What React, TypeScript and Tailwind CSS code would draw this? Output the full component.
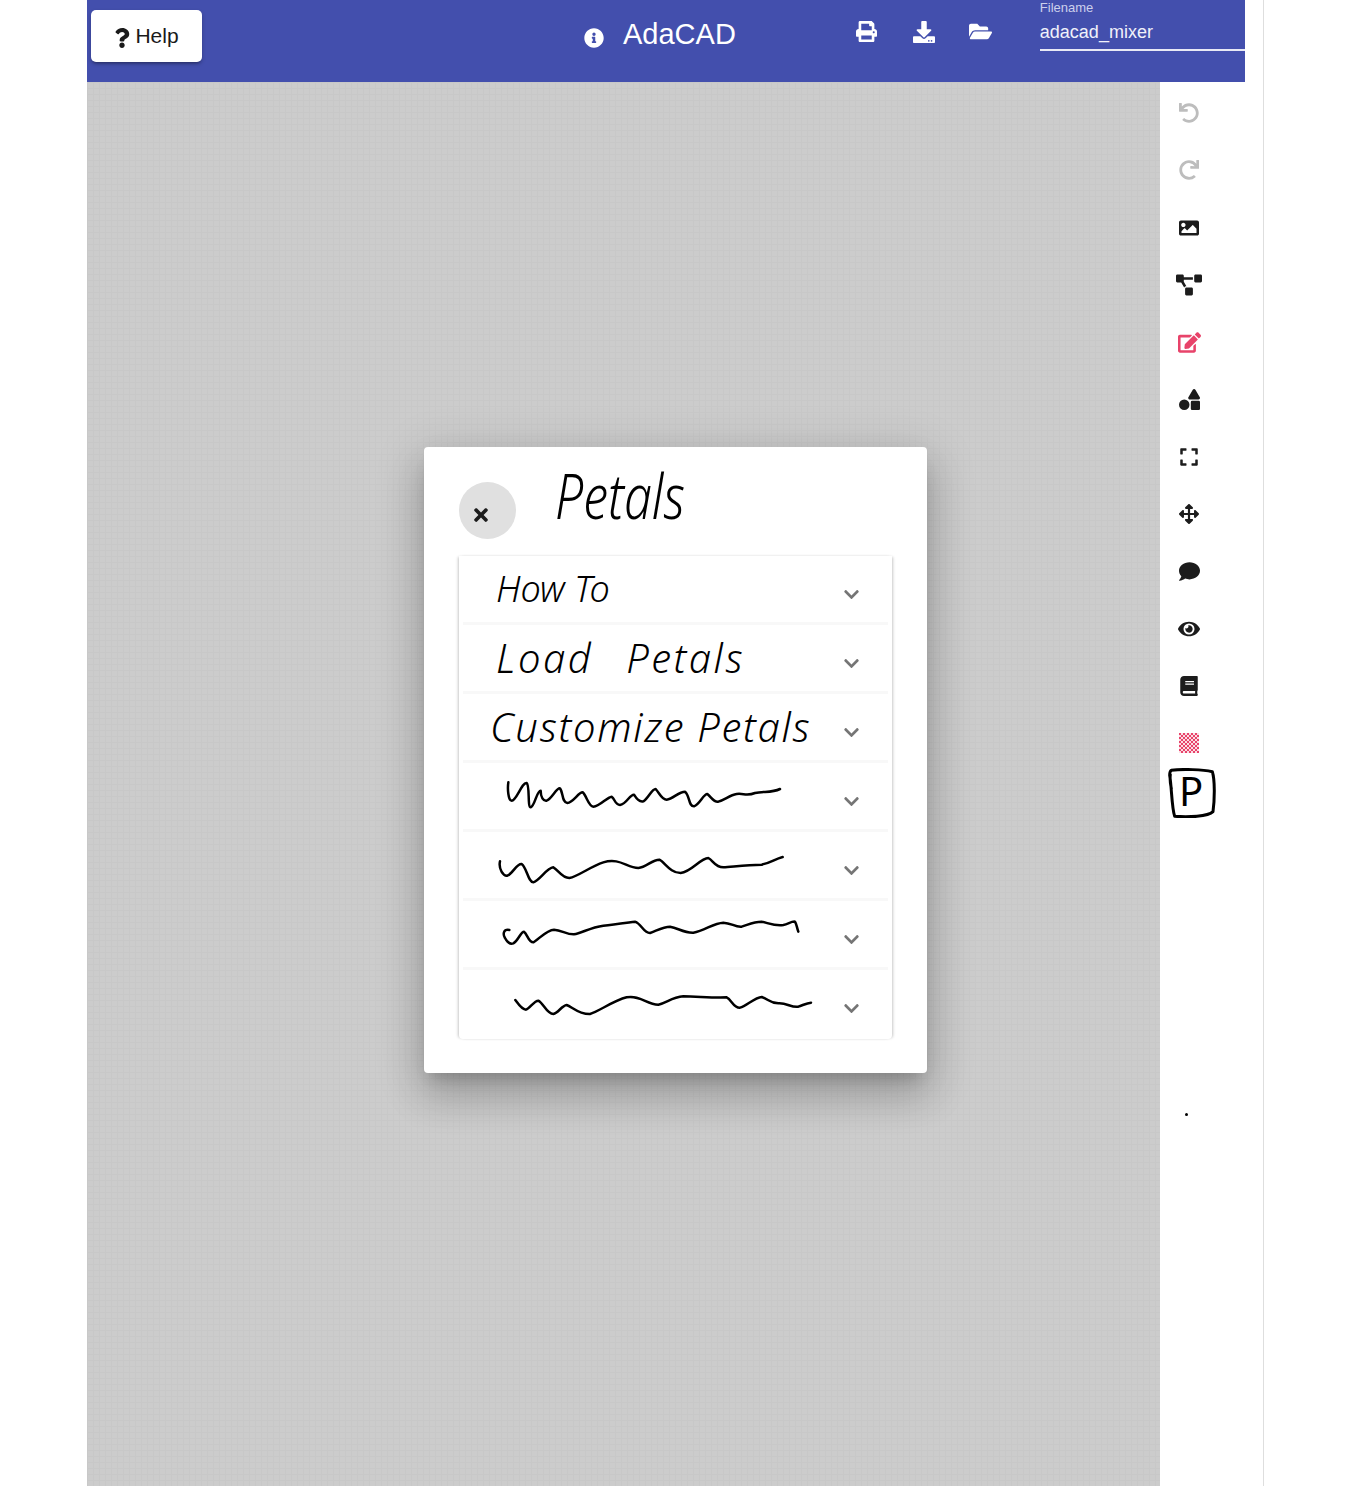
import React from "react";
import {
  FaArrowsAlt, FaBook, FaChevronDown, FaComment, FaDownload, FaEdit, FaExpand, FaEye,
  FaFolderOpen, FaImage, FaInfoCircle, FaPrint, FaProjectDiagram, FaQuestion, FaRedo,
  FaShapes, FaTimes, FaUndo,
} from "react-icons/fa";

const scribbles = [
  { vb: "27 -21 1110 207", d: "M175 40 C172 60 175 95 185 95 C200 95 215 40 230 42 C240 50 232 115 242 115 C255 110 260 65 272 65 C272 85 280 97 290 95 C305 90 320 55 330 58 C340 70 335 100 352 102 C370 100 385 70 398 70 C410 80 415 112 430 113 C450 112 470 85 485 83 C495 90 495 108 510 108 C530 105 540 75 552 77 C560 90 570 100 580 97 C595 88 605 60 617 60 C630 75 635 92 650 92 C670 90 685 68 705 68 C720 80 715 112 732 112 C750 105 760 75 772 75 C785 85 790 100 805 98 C825 92 840 78 860 75 C880 72 890 82 915 72 C940 66 965 72 990 60" },
  { vb: "27 186 1110 207", d: "M150 277 C145 300 160 322 172 320 C190 312 200 283 215 285 C230 295 235 340 250 340 C268 335 290 297 310 295 C325 303 335 327 358 327 C385 322 420 293 460 280 C510 265 530 297 565 297 C590 295 605 272 628 272 C645 280 660 312 692 312 C725 308 750 268 775 267 C790 275 795 295 820 295 C850 293 890 287 935 287 C960 282 975 270 998 264" },
  { vb: "27 -27 1110 207", d: "M178 63 C160 60 158 75 165 87 C172 100 180 107 190 103 C205 95 212 68 222 68 C232 75 235 100 250 100 C265 92 290 62 312 62 C335 63 350 77 372 76 C395 73 420 55 460 50 C490 47 525 42 555 38 C575 45 580 72 600 72 C620 65 640 53 660 53 C685 57 700 72 730 71 C765 65 790 42 820 41 C845 42 855 55 875 53 C895 47 910 38 935 38 C955 42 975 52 1000 48 C1015 45 1025 36 1035 38 C1040 45 1040 55 1045 68" },
  { vb: "27 180 1110 207", d: "M196 273 C205 285 215 302 228 302 C240 298 252 275 265 275 C280 282 290 315 310 315 C325 312 335 290 350 288 C365 292 385 316 420 315 C445 308 490 275 530 265 C570 258 590 286 625 287 C650 282 665 265 700 262 C740 262 790 267 830 265 C845 272 850 297 870 296 C890 290 915 265 935 264 C955 270 960 283 985 283 C1010 281 1025 297 1045 293 C1060 288 1070 282 1083 281" },
];

function Row({ children, last }: { children: React.ReactNode; last?: boolean }) {
  return (
    <div className="px-[4px]">
      <div className={`flex h-[69px] items-center border-b-[3px] pr-[28px] ${last ? "border-transparent" : "border-[#f8f8f8]"}`}>
        <div className="min-w-0 flex-1">{children}</div>
        <FaChevronDown size={17} className="mt-[11px] text-[#757575]" />
      </div>
    </div>
  );
}

function Hand({ children, className }: { children: React.ReactNode; className: string }) {
  return (
    <span className={`block origin-left whitespace-nowrap font-['Noto_Sans',sans-serif] font-light italic leading-none text-black ${className}`}>
      {children}
    </span>
  );
}

function Tool({ children }: { children: React.ReactNode }) {
  return <div className="flex h-[57.3px] w-[58px] items-center justify-center text-[#1c1c1c]">{children}</div>;
}

export default function App() {
  return (
    <div className="relative h-[1486px] w-[1351px] overflow-hidden bg-white font-['Liberation_Sans',sans-serif]">
      <div className="ml-[87px] flex h-full w-[1177px] flex-col border-r border-[#dedede]">
        <header className="flex h-[82px] w-[1158px] shrink-0 items-start bg-[#434fad] text-white">
          <button className="ml-[4px] mt-[10px] flex h-[52px] w-[111px] items-center justify-center gap-[3px] rounded-[5px] bg-white pr-[2px] text-[21px] text-[#1a1a1a] shadow-[0_3px_3px_-2px_rgba(0,0,0,.3),0_2px_4px_rgba(0,0,0,.2)]">
            <FaQuestion size={20} className="mt-[3px]" />
            <span>Help</span>
          </button>
          <FaInfoCircle size={20} className="ml-[382px] mt-[28px]" />
          <h1 className="ml-[19px] mt-[17px] text-[29px] leading-[34px]">AdaCAD</h1>
          <FaPrint size={21} className="ml-[120px] mt-[21px]" />
          <FaDownload size={22} className="ml-[36px] mt-[21px]" />
          <FaFolderOpen size={23} className="ml-[34px] mt-[20px]" />
          <div className="ml-[48px] flex-1 self-stretch">
            <div className="h-[51px] border-b-2 border-[#e8e9f5]">
              <div className="text-[13px] leading-[15px] text-[#ccd0ec]">Filename</div>
              <div className="mt-[7px] text-[18px] leading-[20px] text-[#f0f1fa]">adacad_mixer</div>
            </div>
          </div>
        </header>

        <div className="flex min-h-0 flex-1">
          <main className="w-[1073px] bg-[#cccccc] bg-[linear-gradient(#c8c8c8_1px,transparent_1px),linear-gradient(90deg,#c8c8c8_1px,transparent_1px)] bg-[size:6px_6px]" />
          <aside className="flex flex-1 flex-col pt-[2.5px]">
            <Tool><FaUndo size={20} className="text-[#bdbdbd]" /></Tool>
            <Tool><FaRedo size={20} className="text-[#bdbdbd]" /></Tool>
            <Tool><FaImage size={20} /></Tool>
            <Tool><FaProjectDiagram size={26} /></Tool>
            <Tool><FaEdit size={23} className="text-[#e8436a]" /></Tool>
            <Tool><FaShapes size={21} /></Tool>
            <Tool><FaExpand size={20} /></Tool>
            <Tool><FaArrowsAlt size={20} /></Tool>
            <Tool><FaComment size={21} /></Tool>
            <Tool><FaEye size={22} /></Tool>
            <Tool><FaBook size={20} /></Tool>
            <Tool>
              <svg width="20" height="20" viewBox="0 0 20 20">
                <defs>
                  <pattern id="checker" width="4" height="4" patternUnits="userSpaceOnUse">
                    <rect width="4" height="4" fill="#fbdde4" />
                    <rect width="2" height="2" fill="#e8436a" />
                    <rect x="2" y="2" width="2" height="2" fill="#e8436a" />
                  </pattern>
                </defs>
                <rect width="20" height="20" fill="url(#checker)" />
              </svg>
            </Tool>
            <div className="relative -mt-[4px] ml-[8px] h-[50px] w-[48px]">
              <svg width="48" height="50" viewBox="0 0 144 150" fill="none" stroke="#000" strokeWidth="9" strokeLinecap="round" strokeLinejoin="round">
                <path d="M10 7 C45 2 105 5 133 11 C141 35 140 95 135 131 C120 146 60 148 20 145 C11 120 11 55 5 22 C5 14 8 8 10 7 M7 20 C5 35 7 48 10 62" />
              </svg>
              <span className="absolute left-[11px] top-[1px] font-['Noto_Sans',sans-serif] text-[40px] font-normal leading-[44px] text-black">P</span>
            </div>
            <div className="ml-[25px] mt-[295px] h-[3px] w-[3px] rounded-full bg-black" />
          </aside>
        </div>
      </div>

      <section className="absolute left-[424px] top-[447px] h-[626px] w-[503px] rounded-[4px] bg-white p-[35px] shadow-[0_11px_15px_-7px_rgba(0,0,0,.2),0_24px_38px_3px_rgba(0,0,0,.14),0_9px_46px_8px_rgba(0,0,0,.12)]">
        <div className="flex h-[57px] items-start">
          <button className="flex h-[57px] w-[57px] shrink-0 items-center justify-center rounded-full bg-[#e0e0e0] pr-[13px] pt-[8px] text-[#1c1c1c]">
            <FaTimes size={20} />
          </button>
          <Hand className="ml-[39px] -mt-[12px] text-[50px] scale-y-125">Petals</Hand>
        </div>
        <div className="mt-[17px] rounded-b-[4px] bg-white shadow-[-2px_0_3px_-1px_rgba(0,0,0,.22),2px_0_3px_-1px_rgba(0,0,0,.22)]">
          <Row><Hand className="ml-[33px] text-[36px]">How To</Hand></Row>
          <Row><Hand className="ml-[33px] text-[40px] tracking-[2.5px] [word-spacing:20px]">Load Petals</Hand></Row>
          <Row><Hand className="ml-[27px] text-[40px] tracking-[1.7px]">Customize Petals</Hand></Row>
          {scribbles.map((s, i) => (
            <Row key={s.vb} last={i === 3}>
              <svg className="-ml-[4px] block h-[69px] w-[370px]" viewBox={s.vb} fill="none" stroke="#000" strokeWidth="7.5" strokeLinecap="round" strokeLinejoin="round">
                <path d={s.d} />
              </svg>
            </Row>
          ))}
        </div>
      </section>
    </div>
  );
}
